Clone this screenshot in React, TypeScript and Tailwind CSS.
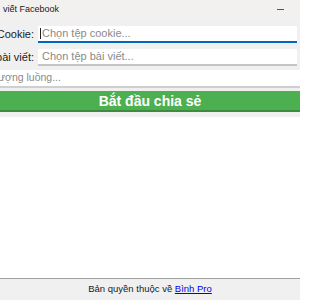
export default function App() {
  return (
    <div
      className="w-[300px] h-[300px] flex flex-col bg-[#f0f0f0] overflow-hidden text-[#1a1a1a]"
      style={{ fontFamily: '"Liberation Sans", Arial, sans-serif' }}
    >
      {/* title bar */}
      <div className="h-[18px] shrink-0 flex items-center justify-between bg-[#f2f1ef] pl-[3px] pr-[16px]">
        <span className="text-[9px] leading-none">viết Facebook</span>
        <span className="block w-[7px] h-px bg-[#555]" />
      </div>

      <div className="flex flex-col pt-[8px]">
        <div className="flex items-center h-[17px] pr-[3px]">
          <div className="w-[34px] shrink-0 overflow-hidden flex justify-end">
            <span className="text-[11px] whitespace-nowrap">Cookie:</span>
          </div>
          <div className="ml-[4px] flex-1 h-full bg-white border-b-2 border-[#0067c0] flex items-center pl-[2px]">
            <span className="w-px h-[11px] bg-[#222] mr-px" />
            <span className="text-[11px] text-[#8a8a8a] whitespace-nowrap">Chọn tệp cookie...</span>
          </div>
        </div>

        <div className="flex items-center h-[17px] pr-[3px] mt-[6px]">
          <div className="w-[34px] shrink-0 overflow-hidden flex justify-end">
            <span className="text-[11px] whitespace-nowrap">bài viết:</span>
          </div>
          <div className="ml-[4px] flex-1 h-full bg-white border-b-2 border-[#c4c4c4] flex items-center pl-[4px]">
            <span className="text-[11px] text-[#8a8a8a] whitespace-nowrap">Chọn tệp bài viết...</span>
          </div>
        </div>

        <div className="h-[18px] mt-[4px] bg-white border-b-2 border-[#cfcfcf] flex items-center overflow-hidden">
          <span className="text-[10.5px] text-[#8a8a8a] whitespace-nowrap -ml-[2px]">ượng luồng...</span>
        </div>

        <div className="h-[21px] mt-[3px] bg-[#4caf50] border-b-2 border-[#3d8a40] flex items-center justify-center">
          <span className="text-[14px] font-bold text-white leading-none">Bắt đầu chia sẻ</span>
        </div>
      </div>

      <div className="flex-1 bg-white mt-[5px]" />

      <div className="h-[22px] shrink-0 border-t border-[#a0a0a0] flex items-center justify-center">
        <span className="text-[9.5px]">
          Bản quyền thuộc về{' '}
          <a href="#" className="text-[#0000ee] underline">
            Bình Pro
          </a>
        </span>
      </div>
    </div>
  );
}
